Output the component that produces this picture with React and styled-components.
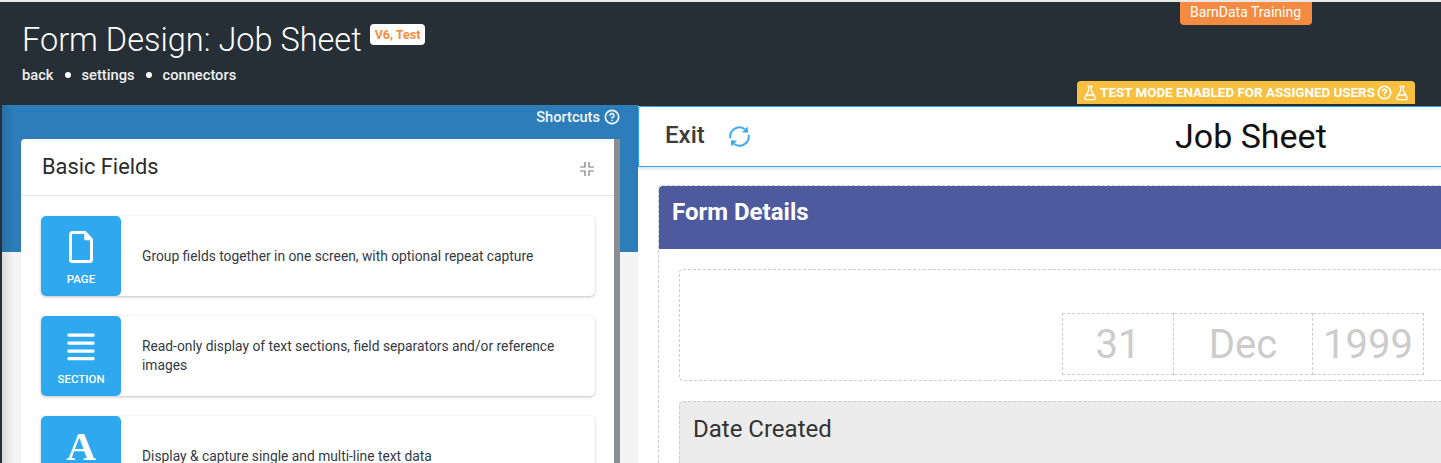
import React from "react";
import styled, { createGlobalStyle } from "styled-components";
import { FlaskConical, CircleHelp } from "lucide-react";

const Global = createGlobalStyle`
  html, body {
    margin: 0;
    height: 463px;
    overflow: hidden;
    background: #f1f1f1;
    font-family: Roboto, "Liberation Sans", sans-serif;
  }
  * { box-sizing: border-box; }
`;

const Page = styled.div`
  width: 1441px;
  height: 463px;
  overflow: hidden;
  padding-top: 2px;
  background: #e8e8e8;
`;

const Header = styled.header`
  height: 103px;
  background: #262e36;
  display: flex;
  justify-content: space-between;
  padding-left: 22px;
`;

const TitleBlock = styled.div`
  padding-top: 18px;
`;

const TitleRow = styled.div`
  display: flex;
  align-items: flex-start;
  gap: 8px;
`;

const Title = styled.h1`
  margin: 0;
  font-size: 32.5px;
  font-weight: 300;
  line-height: 40px;
  color: #fff;
`;

const Tag = styled.span`
  margin-top: 4px;
  padding: 0 5px;
  height: 21px;
  line-height: 21px;
  background: #fff;
  border-radius: 4px;
  color: #f58b40;
  font-size: 12.5px;
  font-weight: 700;
`;

const Links = styled.nav`
  display: flex;
  align-items: center;
  gap: 11px;
  margin-top: 6px;
  font-size: 14.7px;
  font-weight: 500;
  color: #f0f0f0;
`;

const Dot = styled.i`
  width: 6px;
  height: 6px;
  border-radius: 50%;
  background: #fff;
`;

const HeaderRight = styled.div`
  width: 261px;
  margin-right: 26px;
  padding-bottom: 1px;
  display: flex;
  flex-direction: column;
  justify-content: space-between;
  align-items: center;
`;

const Training = styled.div`
  margin-right: 78px;
  width: 132px;
  height: 23px;
  line-height: 21px;
  text-align: center;
  background: #f58b40;
  border-radius: 0 0 4px 4px;
  color: #fff;
  font-size: 14px;
`;

const TestMode = styled.div`
  margin-left: -77px;
  width: 338px;
  height: 23px;
  display: flex;
  align-items: center;
  justify-content: center;
  gap: 2px;
  background: #f9c040;
  border-radius: 4px 4px 0 0;
  color: #fff;
  font-size: 13.4px;
  font-weight: 700;
  white-space: nowrap;
`;

const Body = styled.div`
  display: flex;
  height: 358px;
  padding-left: 2px;
  background: #262e36;
`;

const LeftPane = styled.section`
  width: 636px;
  flex: none;
  padding: 0 18px 0 19px;
  background:
    linear-gradient(to right, rgba(0, 0, 0, 0.1), transparent 12px),
    linear-gradient(#2c7dba 147px, #f4f4f4 147px);
`;

const Shortcuts = styled.div`
  height: 34px;
  padding: 2px 0 0;
  display: flex;
  justify-content: flex-end;
  align-items: flex-start;
  gap: 4px;
  color: #f4f8fb;
  font-size: 14.6px;
  font-weight: 500;
  line-height: 20px;
  svg { margin-top: 2px; }
`;

const Panel = styled.div`
  height: 340px;
  background: #fff;
  border-radius: 4px 0 0 0;
  border-right: 6px solid #8a8d91;
`;

const PanelHead = styled.div`
  height: 57px;
  padding: 0 20px 2px 21px;
  display: flex;
  justify-content: space-between;
  align-items: center;
  border-bottom: 1px solid #e4e4e4;
  font-size: 21.8px;
  color: #2b2b2b;
  svg { margin-top: 6px; }
`;

const FieldList = styled.div`
  padding: 20px 19px 0 20px;
  display: flex;
  flex-direction: column;
  gap: 20px;
`;

const FieldCard = styled.div`
  display: flex;
  align-items: center;
  height: 80px;
  background: #fff;
  border-radius: 5px;
  box-shadow: 0 1px 3px rgba(0, 0, 0, 0.25);
`;

const FieldBadge = styled.div`
  width: 80px;
  height: 80px;
  flex: none;
  display: flex;
  flex-direction: column;
  align-items: center;
  background: #2ea8ef;
  border-radius: 5px;
  color: #fff;
  font-size: 11.5px;
  font-weight: 500;
  svg { display: block; }
`;

const BadgeIcon = styled.div`
  height: 52px;
  margin-bottom: 4px;
  display: flex;
  align-items: center;
  justify-content: center;
  padding-top: 10px;
`;

const LetterIcon = styled.div`
  height: 52px;
  margin-bottom: 4px;
  padding-top: 10px;
  font-family: "Liberation Serif", serif;
  font-size: 41px;
  font-weight: 700;
  line-height: 40px;
`;

const FieldText = styled.p`
  margin: 0;
  padding: 0 21px;
  font-size: 13.8px;
  line-height: 19px;
  color: #333a45;
`;

const RightPane = styled.section`
  flex: 1;
  min-width: 0;
  margin-top: 1px;
  background: #fff;
`;

const TopBar = styled.div`
  position: relative;
  height: 61px;
  display: flex;
  align-items: center;
  gap: 23px;
  padding-left: 26px;
  border: 1px solid #2ea8ef;
  border-right: 0;
  border-radius: 3px 0 0 0;
  box-shadow: 0 2px 3px rgba(0, 0, 0, 0.12);
  background: #fff;
`;

const Exit = styled.span`
  padding-bottom: 4px;
  font-size: 24px;
  font-weight: 500;
  color: #3c3c3c;
`;

const SheetName = styled.h2`
  position: absolute;
  left: 536px;
  top: 9px;
  margin: 0;
  font-size: 34px;
  font-weight: 400;
  line-height: 40px;
  color: #111;
  white-space: nowrap;
`;

const Canvas = styled.div`
  padding: 18px 0 0 20px;
`;

const Section = styled.div`
  border: 1px dashed #ccc;
  border-right: 0;
  border-radius: 4px 0 0 0;
  height: 290px;
`;

const SectionTitle = styled.div`
  height: 63px;
  padding: 8px 0 0 13px;
  background: #4d5a9e;
  border-radius: 4px 0 0 0;
  color: #fff;
  font-size: 24px;
  font-weight: 700;
  line-height: 36px;
`;

const SectionBody = styled.div`
  padding: 20px 0 0 20px;
  display: flex;
  flex-direction: column;
  gap: 20px;
`;

const DateBox = styled.div`
  height: 112px;
  padding: 43px 0 0 382px;
  display: flex;
  border: 1px dashed #ccc;
  border-right: 0;
  border-radius: 4px 0 0 4px;
`;

const DatePart = styled.div`
  width: ${props => props.width}px;
  height: 62px;
  border: 1px dashed #ccc;
  border-left-width: ${props => (props.$first ? 1 : 0)}px;
  text-align: center;
  color: #cccccc;
  font-size: 40px;
  line-height: 62px;
`;

const FieldBar = styled.div`
  height: 80px;
  padding-left: 13px;
  background: #ececec;
  border: 1px dashed #ccc;
  border-right: 0;
  border-radius: 4px 0 0 0;
  font-size: 24px;
  line-height: 54px;
  color: #333;
`;

const fields = [
  { label: "PAGE", text: "Group fields together in one screen, with optional repeat capture", icon: "page" },
  { label: "SECTION", text: "Read-only display of text sections, field separators and/or reference images", icon: "section" },
  { label: "", text: "Display & capture single and multi-line text data", icon: "text" },
];

function PageIcon() {
  return (
    <svg width="24" height="32" viewBox="0 0 24 32" fill="none" stroke="#fff" strokeWidth="3" strokeLinejoin="round">
      <path d="M4 1.5h12l6.5 7v20a2 2 0 0 1-2 2H3.500a2 2 0 0 1-2-2V3.500a2 2 0 0 1 2-2z" />
      <path d="M16 2v6.500h6" fill="#fff" strokeWidth="1.5" />
    </svg>
  );
}

function LinesIcon() {
  return (
    <svg width="28" height="28" viewBox="0 0 28 28" fill="#fff">
      <rect x="0.500" y="0.500" width="27" height="3.200" rx="1" />
      <rect x="0.500" y="8.500" width="27" height="3.200" rx="1" />
      <rect x="0.500" y="16.500" width="27" height="3.200" rx="1" />
      <rect x="0.500" y="24" width="27" height="3.200" rx="1" />
    </svg>
  );
}

function CollapseIcon() {
  return (
    <svg width="14" height="14" viewBox="0 0 14 14" fill="none" stroke="#77797c" strokeWidth="1.200">
      <path d="M5 0v5H0M9 0v5h5M0 9h5v5M14 9H9v5" />
    </svg>
  );
}

function SyncIcon() {
  return (
    <svg width="23" height="23" viewBox="0 0 24 24" fill="none" stroke="#3fa9f0" strokeWidth="2">
      <path d="M2.600 14A9.600 9.600 0 0 1 17.500 4.200" />
      <path d="M21.400 10A9.600 9.600 0 0 1 6.500 19.800" />
      <path d="M14.500 7.500L21 8l-.500-6.500z" fill="#3fa9f0" stroke="none" />
      <path d="M9.500 16.500L3 16l.500 6.500z" fill="#3fa9f0" stroke="none" />
    </svg>
  );
}

export default function App() {
  return (
    <Page>
      <Global />
      <Header>
        <TitleBlock>
          <TitleRow>
            <Title>Form Design: Job Sheet</Title>
            <Tag>V6, Test</Tag>
          </TitleRow>
          <Links>
            <span>back</span>
            <Dot />
            <span>settings</span>
            <Dot />
            <span>connectors</span>
          </Links>
        </TitleBlock>
        <HeaderRight>
          <Training>BarnData Training</Training>
          <TestMode>
            <FlaskConical size={16} strokeWidth={2} />
            TEST MODE ENABLED FOR ASSIGNED USERS
            <CircleHelp size={15} strokeWidth={2.6} />
            <FlaskConical size={16} strokeWidth={2} />
          </TestMode>
        </HeaderRight>
      </Header>
      <Body>
        <LeftPane>
          <Shortcuts>
            Shortcuts <CircleHelp size={16} strokeWidth={2.6} />
          </Shortcuts>
          <Panel>
            <PanelHead>
              Basic Fields
              <CollapseIcon />
            </PanelHead>
            <FieldList>
              {fields.map(f => (
                <FieldCard key={f.text}>
                  <FieldBadge>
                    {f.icon === "text" ? (
                      <LetterIcon>A</LetterIcon>
                    ) : (
                      <BadgeIcon>{f.icon === "page" ? <PageIcon /> : <LinesIcon />}</BadgeIcon>
                    )}
                    {f.label}
                  </FieldBadge>
                  <FieldText>{f.text}</FieldText>
                </FieldCard>
              ))}
            </FieldList>
          </Panel>
        </LeftPane>
        <RightPane>
          <TopBar>
            <Exit>Exit</Exit>
            <SyncIcon />
            <SheetName>Job Sheet</SheetName>
          </TopBar>
          <Canvas>
            <Section>
              <SectionTitle>Form Details</SectionTitle>
              <SectionBody>
                <DateBox>
                  <DatePart width={112} $first>31</DatePart>
                  <DatePart width={139}>Dec</DatePart>
                  <DatePart width={111}>1999</DatePart>
                </DateBox>
                <FieldBar>Date Created</FieldBar>
              </SectionBody>
            </Section>
          </Canvas>
        </RightPane>
      </Body>
    </Page>
  );
}
